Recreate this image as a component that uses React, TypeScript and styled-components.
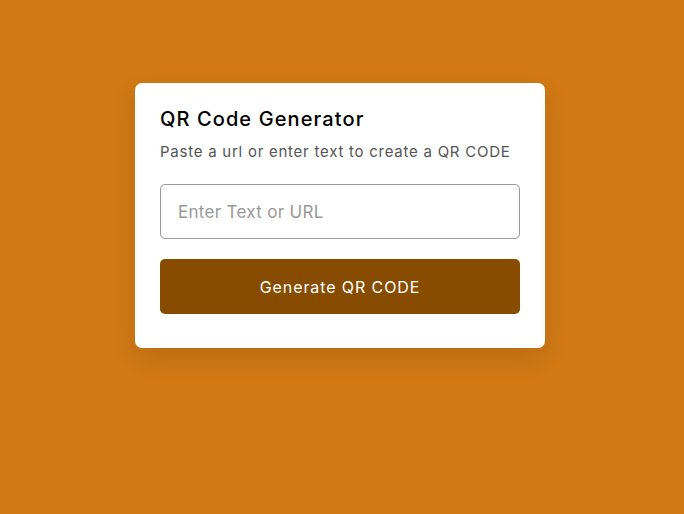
import React from "react";
import styled, { createGlobalStyle } from "styled-components";

const Global = createGlobalStyle`
  html, body { margin: 0; padding: 0; }
  body {
    background: #d07915;
    font-family: Inter, "Open Sans", sans-serif;
    min-height: 514px;
  }
`;

const Page = styled.div`
  display: flex;
  justify-content: center;
  padding: 83px 4px 0 0;
`;

const Card = styled.div`
  width: 410px;
  box-sizing: border-box;
  background: #fff;
  border-radius: 7px;
  padding: 22px 25px 34px;
  box-shadow: 0 10px 25px rgba(0, 0, 0, 0.1);
  display: flex;
  flex-direction: column;
`;

const Title = styled.h1`
  margin: 0;
  font-size: 20px;
  font-weight: 500;
  color: #000;
  line-height: 28px;
  letter-spacing: 1.1px;
`;

const Subtitle = styled.p`
  margin: 9px 0 0;
  font-size: 15px;
  color: #555;
  line-height: 20px;
  letter-spacing: 0.75px;
`;

const Input = styled.input`
  margin-top: 22px;
  height: 55px;
  box-sizing: border-box;
  border: 1px solid #999;
  border-radius: 5px;
  padding: 0 17px;
  font-family: inherit;
  font-size: 17px;
  letter-spacing: 0.3px;
  color: #333;
  outline: none;
  &::placeholder { color: #999; }
`;

const Button = styled.button`
  margin-top: 20px;
  height: 55px;
  border: none;
  border-radius: 5px;
  background: #874c00;
  color: #fff;
  font-family: inherit;
  font-size: 16px;
  letter-spacing: 0.9px;
  cursor: pointer;
`;

export default function App() {
  return (
    <>
      <Global />
      <Page>
        <Card>
          <Title>QR Code Generator</Title>
          <Subtitle>Paste a url or enter text to create a QR CODE</Subtitle>
          <Input placeholder="Enter Text or URL" />
          <Button>Generate QR CODE</Button>
        </Card>
      </Page>
    </>
  );
}
